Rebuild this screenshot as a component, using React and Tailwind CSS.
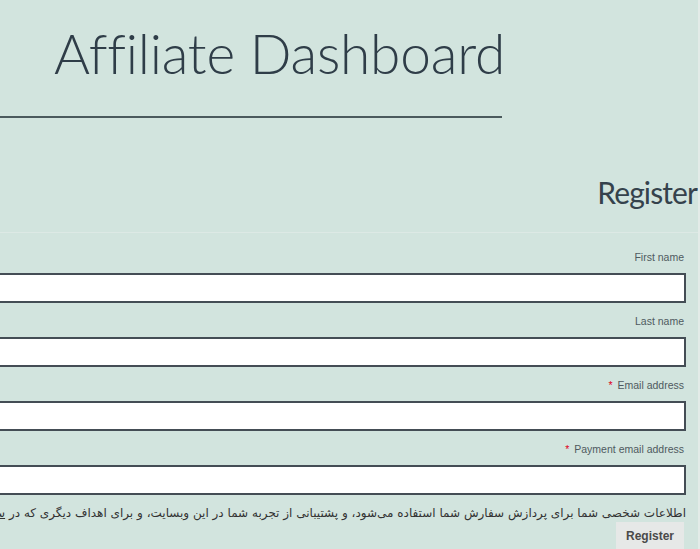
import React from 'react';

const fields = [
  { label: 'First name', required: false },
  { label: 'Last name', required: false },
  { label: 'Email address', required: true },
  { label: 'Payment email address', required: true },
];

function Field({ label, required }) {
  return (
    <div className="flex flex-col items-end">
      <label className="h-[16px] pr-[2px] text-[10.5px] leading-[16px] text-[#4f5a60]">
        {required && <span className="mr-[5px] text-[#e0001b]">*</span>}
        {label}
      </label>
      <input
        type="text"
        className="mt-[8px] h-[30px] w-full border-2 border-[#444d55] bg-white outline-none"
      />
    </div>
  );
}

export default function App() {
  return (
    <div
      className="relative h-[549px] w-[700px] overflow-hidden border-r-2 border-[#e3ebe8] bg-[#d2e4de]"
      style={{ fontFamily: '"Liberation Sans", Arial, sans-serif' }}
    >
      {/* Header */}
      <header className="w-[502px] border-b-2 border-[#4b5a5d] pb-[30px] pt-[20px]">
        <h1
          className="whitespace-nowrap pl-[54px] text-[55px] font-light leading-[66px] tracking-[-0.2px] text-[#2f3d48] [font-variant-ligatures:none]"
          style={{ fontFamily: 'Lato, "Open Sans", sans-serif' }}
        >
          Affiliate Dashboard
        </h1>
      </header>

      {/* Register form */}
      <section className="mt-[56px]">
        <h2
          className="pr-[1px] text-right text-[30px] leading-[36px] tracking-[-0.9px] text-[#35424c]"
          style={{ fontFamily: 'Lato, "Open Sans", sans-serif' }}
        >
          Register
        </h2>
        <div className="mt-[22px] border-t border-[#dde9e5]" />

        <form className="-ml-[40px] mr-[12px] mt-[16px] flex flex-col gap-[10px]">
          {fields.map((f) => (
            <Field key={f.label} {...f} />
          ))}
        </form>

        <p
          dir="rtl"
          className="mr-[12px] mt-[9px] overflow-hidden whitespace-nowrap text-[12px] leading-[18px] text-[#333]"
          style={{ fontFamily: '"DejaVu Sans", sans-serif' }}
        >
          اطلاعات شخصی شما برای پردازش سفارش شما استفاده می‌شود، و پشتیبانی از تجربه شما در این وبسایت، و برای اهداف دیگری که در{' '}
          <a href="#" className="underline">سیاست حفظ حریم خصوصی</a> توضیح داده شده است.
        </p>

        <div className="mr-[14px] flex justify-end">
          <button className="h-[28px] w-[68px] bg-[#e6e8e7] text-[12px] font-bold text-[#4a4a4a]">
            Register
          </button>
        </div>
      </section>
    </div>
  );
}
